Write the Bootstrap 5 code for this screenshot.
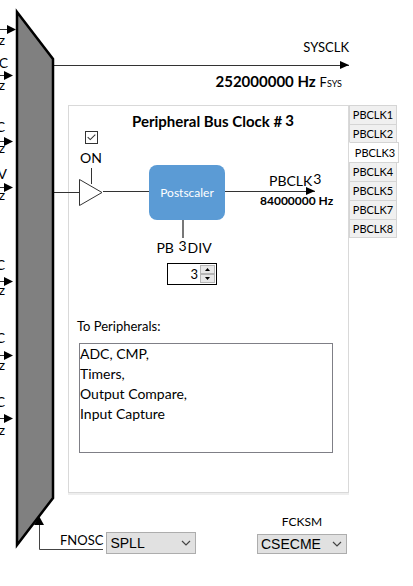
<!DOCTYPE html>
<html lang="en">
<head>
<meta charset="utf-8">
<meta name="viewport" content="width=device-width, initial-scale=1">
<title>Peripheral Bus Clock</title>
<link href="https://cdn.jsdelivr.net/npm/bootstrap@5.3.0/dist/css/bootstrap.min.css" rel="stylesheet">
<style>
body{font-family:"Lato","Noto Sans",sans-serif;font-size:14px;line-height:20px;color:#000;background:#fff}
.mux{width:54px;height:560px;overflow:visible;pointer-events:none;position:relative;z-index:1}
.mux text{font-size:14px}
.sys{padding:37px 64px 0 0}
.sys .freq{font-size:15px;padding-right:7px}
.sys .nm{font-size:13px}
.fsub{font-size:13px}
.fsub small{font-size:9px}
.wire{height:1px;background:#333;position:relative}
.arrowed::after{content:"";position:absolute;right:0;top:-4px;border:solid transparent;border-width:4px 0 4px 9px;border-left-color:#000}
.sysrow{margin:8px 64px 5px 0}
.board{margin:11px 14px 0 14px}
.panel{border:1px solid #d9d9d9;height:388px;padding:5px 15px 0 10px;min-width:0;box-shadow:0 2px 0 #eee}
.ttl{font-size:15px;font-weight:700;margin:0;line-height:20px;padding-left:53px}
.ttl output{margin-left:3px;position:relative;top:-1px}
.gate{width:24px}
.gate .form-check-input{width:13px;height:13px;margin:0;border:1px solid #333;border-radius:0;background-color:#fff}
.gate .form-check-input:checked{background-image:url("data:image/svg+xml,%3Csvg xmlns='http://www.w3.org/2000/svg' viewBox='0 0 13 13'%3E%3Cpath d='M2 6l3 3 6-6' fill='none' stroke='%23333' stroke-width='1.2'/%3E%3C/svg%3E");background-size:100%}
.gate label{line-height:18px;margin:5px 0 1px}
.buf{width:50px;height:38px;margin-left:-26px}
.joint{width:46px;margin-top:60px}
.divider{width:76px;margin-top:34px}
.block{width:76px;height:55px;border-radius:8px;background:#5b9bd5;color:#fff;font-size:12px}
.stem{width:2px;height:18px;background:#777;margin-left:-8px}
.spin{width:50px;height:22px;border:1px solid #000;padding:1px;margin:5px 0 0 10px}
.spin input{width:31px;border:0;padding:0 2px 0 0;font-size:13px;text-align:right;outline:0;background:transparent;appearance:textfield;-moz-appearance:textfield}
.spin input::-webkit-inner-spin-button{display:none}
.spin button{width:15px;height:9px;padding:0;border:1px solid #b5b5b5;background:#e8e8e8;line-height:0}
.spin svg{width:5px;height:3px;display:block;margin:auto}
.outp{width:90px;margin-top:40px}
.outp .rate{font-size:12px;font-weight:700;white-space:nowrap;line-height:18px;padding-left:35px}
.outp .nm{padding-left:44px;white-space:nowrap}
.outp .nm output,.pbdiv output{position:relative;top:-2px;margin:0 1px}
.pbdiv{white-space:nowrap;margin-right:6px}
.periph-label{font-size:13px;margin:31px 0 7px -2px;line-height:20px}
.periph{border:1px solid #7f7f86;height:110px;padding:0;resize:none;outline:0;overflow:hidden;line-height:20px;font-size:14px}
.tabs{width:50px}
.tabs button{width:48px;height:19px;border:1px solid #d5d5d5;border-bottom-width:0;background:#f0f0f0;font-size:11px;line-height:16px;padding:0;white-space:nowrap;color:#000}
.tabs button:last-child{border-bottom-width:1px}
.tabs button.active{width:50px;height:21px;background:#fff;border-left-color:#fff;border-bottom-width:1px;margin:-1px 0;padding-left:2px}
.foot{padding:19px 66px 0 6px}
.pick{width:90px;height:22px;border:1px solid #adadad;border-radius:0;background-color:#e1e1e1;font:14px/18px "Liberation Sans",sans-serif;padding:0 18px 0 3px;color:#000;background-size:10px 10px;background-position:right 4px center;background-image:url("data:image/svg+xml,%3Csvg xmlns='http://www.w3.org/2000/svg' viewBox='0 0 10 10'%3E%3Cpath d='M1 3l4 4 4-4' fill='none' stroke='%23444' stroke-width='1.2'/%3E%3C/svg%3E")}
.pick.short{height:20px;line-height:16px}
.cap{font-size:12px;margin-bottom:2px}
.src{font-size:13px;padding:0 3px 6px 0}
.mode{padding-bottom:2px}
</style>
</head>
<body>
<main class="d-flex align-items-start">
  <svg class="mux flex-shrink-0" role="img" aria-label="Clock source multiplexer">
    <defs><path id="hd" d="M0-4.500L9 0L0 4.500Z"/></defs>
    <path d="M17 12L53 59V498L17 545Z" fill="#808080" stroke="#000" stroke-width="2.500"/>
    <path d="M0 29.500H8M0 75.500H5M0 141.500H5M0 187.500H5M0 281.500H5M0 355.500H5M0 418.500H5" stroke="#333"/>
    <use href="#hd" x="7" y="29.500"/><use href="#hd" x="4" y="75.500"/><use href="#hd" x="4" y="141.500"/><use href="#hd" x="4" y="187.500"/><use href="#hd" x="4" y="281.500"/><use href="#hd" x="4" y="355.500"/><use href="#hd" x="4" y="418.500"/>
    <g text-anchor="end">
      <text x="8" y="68">C</text><text x="5" y="132">C</text><text x="7" y="179">V</text><text x="5" y="270">C</text><text x="5" y="343">C</text><text x="5" y="407">C</text>
      <text x="5" y="45">z</text><text x="5" y="90">z</text><text x="5" y="153">z</text><text x="5" y="200">z</text><text x="5" y="295">z</text><text x="5" y="370">z</text><text x="5" y="435">z</text>
    </g>
    <path d="M39.500 522V549.500H103" fill="none" stroke="#444"/>
    <path d="M39 516L44 525H34Z"/>
  </svg>

  <div class="flex-grow-1">
    <section class="sys text-end">
      <div class="nm">SYSCLK</div>
    </section>
    <div class="wire arrowed sysrow"></div>
    <section class="sys pt-0 text-end">
      <div class="freq"><b>252000000 Hz</b> <span class="fsub">F<small>SYS</small></span></div>
    </section>

    <section class="board d-flex align-items-start">
      <div class="panel flex-grow-1">
        <h1 class="ttl">Peripheral Bus Clock #<output>3</output></h1>
        <div class="d-flex align-items-start">
          <div class="gate d-flex flex-column align-items-center">
            <input class="form-check-input" type="checkbox" id="on" checked>
            <label for="on">ON</label>
            <svg class="buf" aria-hidden="true"><path d="M0 24.500H26M38.500 0V16M26.500 11.500V37.500L49 24.500Z" fill="none" stroke="#333"/></svg>
          </div>
          <div class="joint wire"></div>
          <div class="divider d-flex flex-column align-items-center">
            <div class="block d-flex align-items-center justify-content-center">Postscaler</div>
            <div class="stem"></div>
            <label class="pbdiv" for="div">PB <output>3</output>DIV</label>
            <div class="spin d-flex">
              <input type="number" id="div" value="3">
              <div class="d-flex flex-column">
                <button type="button" aria-label="Increase"><svg viewBox="0 0 5 3"><path d="M0 3L2.500 0L5 3Z"/></svg></button>
                <button type="button" aria-label="Decrease"><svg viewBox="0 0 5 3"><path d="M0 0L2.500 3L5 0Z"/></svg></button>
              </div>
            </div>
          </div>
          <div class="outp">
            <div class="nm">PBCLK<output>3</output></div>
            <div class="wire arrowed"></div>
            <div class="rate">84000000 Hz</div>
          </div>
        </div>
        <label class="periph-label d-block" for="per">To Peripherals:</label>
        <textarea class="periph d-block w-100" id="per" readonly>ADC, CMP,
Timers,
Output Compare,
Input Capture</textarea>
      </div>
      <nav class="tabs d-flex flex-column align-items-start flex-shrink-0" aria-label="Peripheral bus clocks">
        <button type="button">PBCLK1</button>
        <button type="button">PBCLK2</button>
        <button type="button" class="active">PBCLK3</button>
        <button type="button">PBCLK4</button>
        <button type="button">PBCLK5</button>
        <button type="button">PBCLK7</button>
        <button type="button">PBCLK8</button>
      </nav>
    </section>

    <section class="foot d-flex align-items-end justify-content-between">
      <div class="d-flex align-items-center">
        <label class="src" for="fnosc">FNOSC</label>
        <select class="form-select pick" id="fnosc"><option>SPLL</option></select>
      </div>
      <div class="mode d-flex flex-column align-items-center">
        <label class="cap" for="fcksm">FCKSM</label>
        <select class="form-select pick short" id="fcksm"><option>CSECME</option></select>
      </div>
    </section>
  </div>
</main>
<script src="https://cdn.jsdelivr.net/npm/bootstrap@5.3.0/dist/js/bootstrap.bundle.min.js"></script>
</body>
</html>
